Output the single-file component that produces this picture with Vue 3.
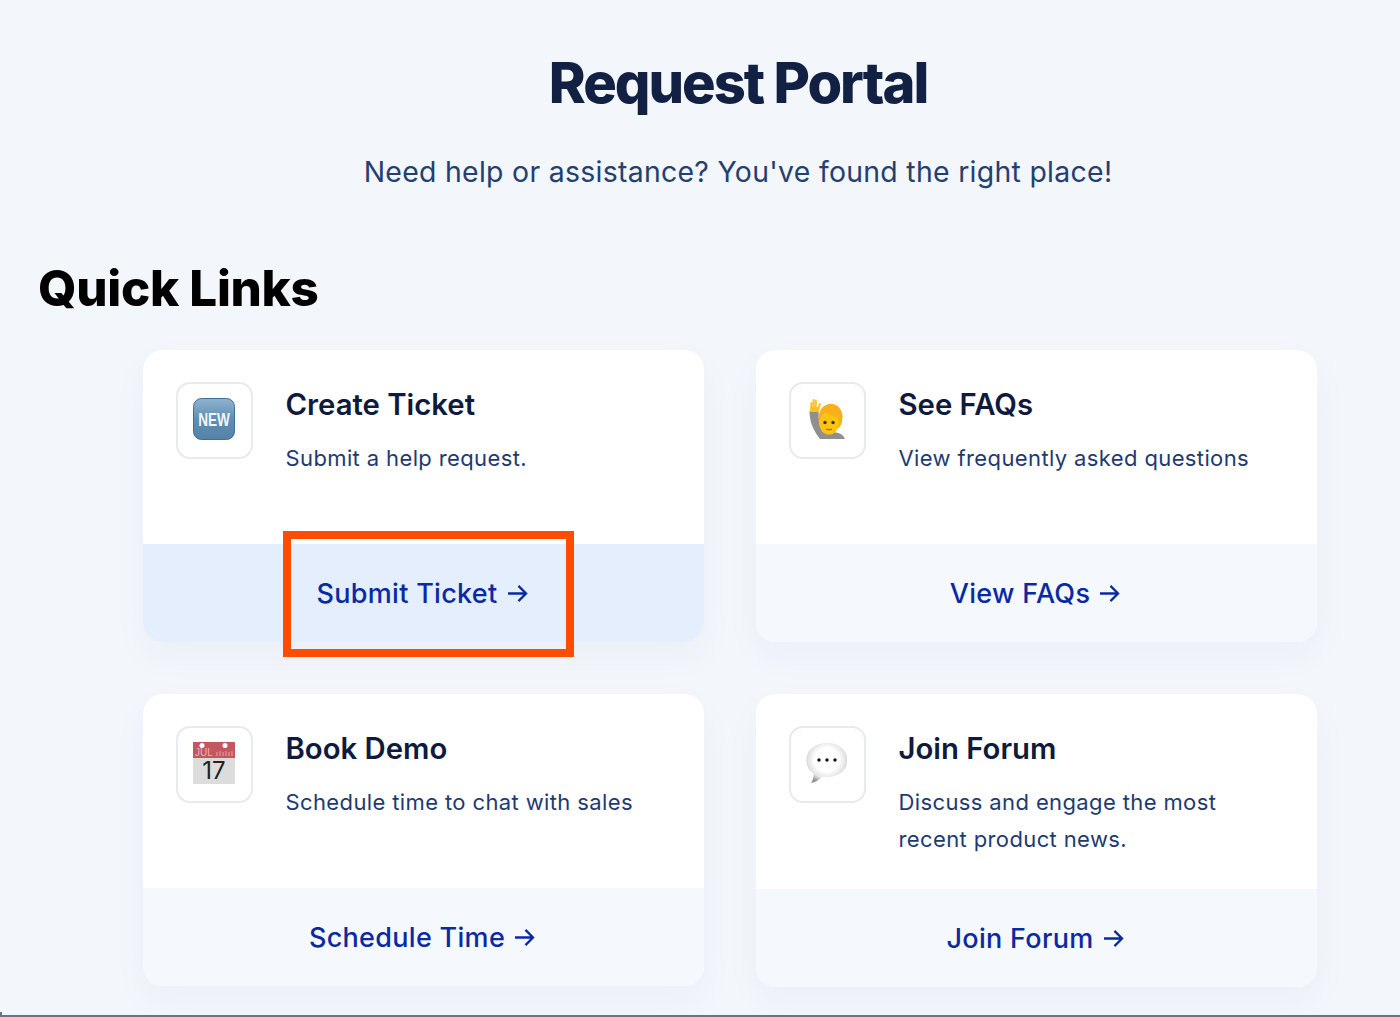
<template>
  <div class="page">
    <header class="hero">
      <h1>Request Portal</h1>
      <p>Need help or assistance? You've found the right place!</p>
    </header>
    <h2>Quick Links</h2>
    <div class="grid">
      <div class="card">
        <div class="top">
          <div class="icon">
            <svg width="42" height="42" viewBox="0 0 42 42">
              <defs>
                <linearGradient id="newbg" x1="0" y1="0" x2="0" y2="1">
                  <stop offset="0" stop-color="#8fb3cf" />
                  <stop offset="0.5" stop-color="#5f8fb4" />
                  <stop offset="1" stop-color="#5583a8" />
                </linearGradient>
              </defs>
              <rect x="0.5" y="0.5" width="41" height="41" rx="8" fill="url(#newbg)" stroke="#3f6f94" />
              <text transform="translate(21 28) scale(0.97 1.25)" text-anchor="middle" class="new">NEW</text>
            </svg>
          </div>
          <div class="text">
            <h3>Create Ticket</h3>
            <p>Submit a help request.</p>
          </div>
        </div>
        <div class="bottom active">
          <a>Submit Ticket
            <svg class="arrow" width="21" height="19" viewBox="0 0 22 20"><path d="M1 10 H20 M12 2 L20 10 L12 18" /></svg>
          </a>
          <div class="mark"></div>
        </div>
      </div>

      <div class="card">
        <div class="top">
          <div class="icon">
            <svg width="42" height="42" viewBox="0 0 42 42">
              <path d="M3.500 13 C3.500 25 8 33 14 41 L39 41 C37 36 33 35 28 34 L17 34 C14 29 12.500 22 12.500 13 Z" fill="#8f8f8f" />
              <path d="M5.300 13 V5 M7.500 13 V2 M9.800 13 V2.500 M11.800 13 L13.800 6" stroke="#fcc21b" stroke-width="2" stroke-linecap="round" />
              <path d="M4.300 14 L4.300 9 L12.500 9 L12.500 14 Z" fill="#fcc21b" />
              <path d="M13 24 C11 12 18 6 25 6 C33 6 38 13 36 24 C35 28 33 30 31 31 L20 20 Z" fill="#f8b01c" />
              <ellipse cx="23" cy="25" rx="10" ry="11.500" fill="#fcc40f" />
              <path d="M12.800 24 C14 19 17 16 20 14 C24 18 29 19 33.500 19 L34 24 L36.500 20 C36 10 29 6 25 6 C18 6 12 12 12.800 24 Z" fill="#f8b01c" />
              <circle cx="19" cy="24.500" r="1.700" fill="#4a2c10" />
              <circle cx="27" cy="24.500" r="1.700" fill="#4a2c10" />
              <path d="M20 31 C22 32 24 32 26 31" stroke="#8a4a10" stroke-width="1" fill="none" />
            </svg>
          </div>
          <div class="text">
            <h3>See FAQs</h3>
            <p>View frequently asked questions</p>
          </div>
        </div>
        <div class="bottom">
          <a>View FAQs
            <svg class="arrow" width="21" height="19" viewBox="0 0 22 20"><path d="M1 10 H20 M12 2 L20 10 L12 18" /></svg>
          </a>
        </div>
      </div>

      <div class="card">
        <div class="top">
          <div class="icon">
            <svg width="42" height="42" viewBox="0 0 42 42">
              <rect x="0" y="0" width="42" height="42" fill="#dcdcdc" />
              <rect x="0" y="0" width="42" height="16" fill="#c4565f" />
              <circle cx="9" cy="3.500" r="2.500" fill="#fff" />
              <circle cx="32" cy="3.500" r="2.500" fill="#fff" />
              <text x="2" y="14" class="jul">JUL</text>
              <path d="M24 14 V10 M27 14 V9 M30 14 V10 M33 14 V9 M36 14 V10 M39 14 V9" stroke="#d98a90" stroke-width="1.500" />
              <text x="21" y="37" text-anchor="middle" class="day">17</text>
            </svg>
          </div>
          <div class="text">
            <h3>Book Demo</h3>
            <p>Schedule time to chat with sales</p>
          </div>
        </div>
        <div class="bottom">
          <a>Schedule Time
            <svg class="arrow" width="21" height="19" viewBox="0 0 22 20"><path d="M1 10 H20 M12 2 L20 10 L12 18" /></svg>
          </a>
        </div>
      </div>

      <div class="card">
        <div class="top">
          <div class="icon">
            <svg width="42" height="42" viewBox="0 0 42 42">
              <defs>
                <radialGradient id="bubble" cx="0.5" cy="0.42" r="0.6">
                  <stop offset="0.5" stop-color="#ffffff" />
                  <stop offset="0.78" stop-color="#e2e2e2" />
                  <stop offset="1" stop-color="#8f8f8f" />
                </radialGradient>
              </defs>
              <path d="M21 1 C32 1 41 7 41 18 C41 29 32 35 21 35 C19 35 17.500 34.800 16 34.500 C13 38 9 40.500 5 41 C7 38 7.800 35 7.500 31.500 C3 28.500 .5 24 .5 18 C.5 7 10 1 21 1 Z" fill="url(#bubble)" />
              <circle cx="13" cy="18" r="1.800" fill="#1c1c1c" />
              <circle cx="21" cy="18" r="1.800" fill="#1c1c1c" />
              <circle cx="29" cy="18" r="1.800" fill="#1c1c1c" />
            </svg>
          </div>
          <div class="text">
            <h3>Join Forum</h3>
            <p>Discuss and engage the most recent product news.</p>
          </div>
        </div>
        <div class="bottom">
          <a>Join Forum
            <svg class="arrow" width="21" height="19" viewBox="0 0 22 20"><path d="M1 10 H20 M12 2 L20 10 L12 18" /></svg>
          </a>
        </div>
      </div>
    </div>
  </div>
</template>

<script setup>
</script>

<style>
html, body {
  margin: 0;
  background: #f3f6fb;
}
</style>

<style scoped>
.page {
  position: relative;
  height: 1017px;
  box-sizing: border-box;
  overflow: hidden;
  border-bottom: 2px solid #6b7280;
  background: #f3f6fb;
  font-family: Inter, "Liberation Sans", sans-serif;
  padding-top: 48px;
}
.page::after {
  content: "";
  position: absolute;
  left: 0;
  bottom: 0;
  width: 2px;
  height: 3px;
  background: #6b7280;
}
.hero {
  padding-left: 76px;
  text-align: center;
}
h1 {
  margin: 0;
  font-size: 56px;
  line-height: 70px;
  font-weight: 800;
  letter-spacing: -2px;
  color: #122044;
}
.hero p {
  margin: 32px 0 0;
  font-size: 28.400px;
  line-height: 44px;
  letter-spacing: 0.3px;
  color: #24406f;
}
h2 {
  margin: 64px 0 0 38px;
  font-size: 49.300px;
  line-height: 60px;
  font-weight: 800;
  letter-spacing: -0.3px;
  color: #000;
}
.grid {
  display: grid;
  grid-template-columns: 561px 561px;
  gap: 52px;
  align-items: start;
  margin: 32px 0 0 143px;
}
.card {
  background: #fff;
  border-radius: 20px;
  box-shadow: 0 14px 36px rgba(40, 60, 120, 0.04);
}
.top {
  display: flex;
  gap: 33px;
  padding: 32px 33px 32px 32.500px;
  min-height: 130px;
}
.icon {
  flex: none;
  width: 77px;
  height: 77px;
  box-sizing: border-box;
  border: 2px solid #e7eaf1;
  border-radius: 14px;
  display: flex;
  align-items: center;
  justify-content: center;
}
.icon svg {
  margin: -3px 0 0 -1px;
}
.text {
  flex: 1;
}
h3 {
  margin: 0;
  font-size: 29.300px;
  line-height: 46px;
  font-weight: 600;
  color: #0f1a3c;
}
.text p {
  margin: 12px 0 0;
  font-size: 22px;
  line-height: 36.500px;
  letter-spacing: 0.38px;
  color: #1e3a70;
}
.bottom {
  position: relative;
  height: 98px;
  display: flex;
  align-items: center;
  justify-content: center;
  background: #f5f8fd;
  border-radius: 0 0 20px 20px;
}
.bottom.active {
  background: #e4eefd;
}
.bottom a {
  display: flex;
  align-items: center;
  gap: 9px;
  padding-right: 3px;
  font-size: 27px;
  font-weight: 500;
  letter-spacing: 0.3px;
  color: #0a2aa3;
}
.arrow {
  fill: none;
  stroke: currentColor;
  stroke-width: 2.400;
}
.mark {
  position: absolute;
  left: 140px;
  top: -13px;
  width: 290.500px;
  height: 126px;
  box-sizing: border-box;
  border: 8.500px solid #ff4d00;
}
.new {
  font-family: "Liberation Sans", sans-serif;
  font-size: 14px;
  font-weight: 700;
  fill: #f2f6fa;
}
.jul {
  font-family: "Liberation Sans", sans-serif;
  font-size: 10px;
  fill: #e9b4b8;
}
.day {
  font-family: Inter, sans-serif;
  font-size: 24px;
  fill: #222;
}
</style>
